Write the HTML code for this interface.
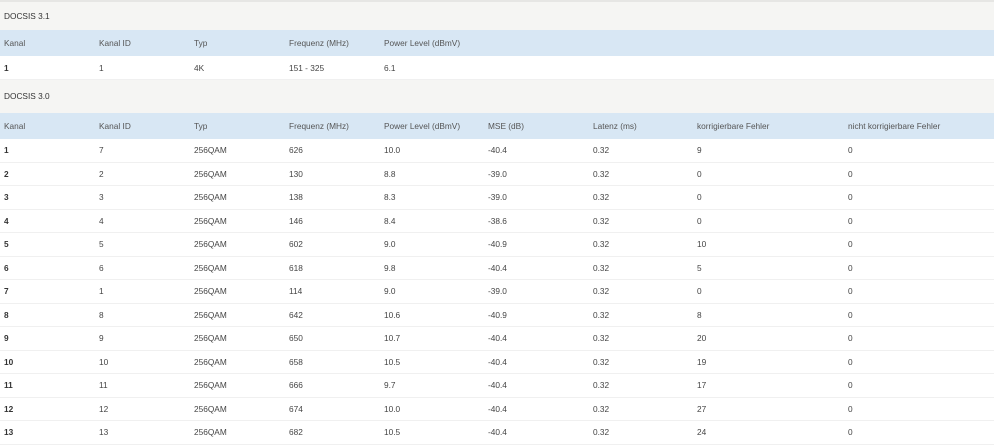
<!DOCTYPE html>
<html><head><style>
*{margin:0;padding:0;box-sizing:border-box}
body{width:999px;height:446px;background:#fff;font-family:"Liberation Sans",sans-serif;font-size:8.3px;color:#444;overflow:hidden;position:relative}
.wrap{position:absolute;left:0;top:0;width:994px}
.title{height:30px;background:#f5f5f3;padding:9px 0 0 4px;border-top:2px solid #e6e6e4;color:#333}
.hdr{height:26px;background:#d8e7f4;position:relative;color:#555}
.row{height:23.5px;position:relative;border-bottom:1px solid #f0f0f0}
.c{position:absolute;top:50%;transform:translateY(-50%);white-space:nowrap}
.row .c:first-child{font-weight:bold;color:#333}
</style></head><body><div class="wrap">
<div class="title">DOCSIS 3.1</div>
<div class="hdr"><span class="c" style="left:4px">Kanal</span><span class="c" style="left:99px">Kanal ID</span><span class="c" style="left:194px">Typ</span><span class="c" style="left:289px">Frequenz (MHz)</span><span class="c" style="left:384px">Power Level (dBmV)</span></div>
<div class="row" style="height:24px"><span class="c" style="left:4px">1</span><span class="c" style="left:99px">1</span><span class="c" style="left:194px">4K</span><span class="c" style="left:289px">151 - 325</span><span class="c" style="left:384px">6.1</span></div>
<div class="title" style="height:33px;border-top:none;padding-top:11px">DOCSIS 3.0</div>
<div class="hdr"><span class="c" style="left:4px">Kanal</span><span class="c" style="left:99px">Kanal ID</span><span class="c" style="left:194px">Typ</span><span class="c" style="left:289px">Frequenz (MHz)</span><span class="c" style="left:384px">Power Level (dBmV)</span><span class="c" style="left:488px">MSE (dB)</span><span class="c" style="left:593px">Latenz (ms)</span><span class="c" style="left:697px">korrigierbare Fehler</span><span class="c" style="left:848px">nicht korrigierbare Fehler</span></div>
<div id="rows"></div>
</div>
<script>
var d=[[1,7,626,"10.0","-40.4",9],[2,2,130,"8.8","-39.0",0],[3,3,138,"8.3","-39.0",0],[4,4,146,"8.4","-38.6",0],[5,5,602,"9.0","-40.9",10],[6,6,618,"9.8","-40.4",5],[7,1,114,"9.0","-39.0",0],[8,8,642,"10.6","-40.9",8],[9,9,650,"10.7","-40.4",20],[10,10,658,"10.5","-40.4",19],[11,11,666,"9.7","-40.4",17],[12,12,674,"10.0","-40.4",27],[13,13,682,"10.5","-40.4",24]];
var h="";d.forEach(function(r){h+='<div class="row"><span class="c" style="left:4px">'+r[0]+'</span><span class="c" style="left:99px">'+r[1]+'</span><span class="c" style="left:194px">256QAM</span><span class="c" style="left:289px">'+r[2]+'</span><span class="c" style="left:384px">'+r[3]+'</span><span class="c" style="left:488px">'+r[4]+'</span><span class="c" style="left:593px">0.32</span><span class="c" style="left:697px">'+r[5]+'</span><span class="c" style="left:848px">0</span></div>'});
document.getElementById("rows").innerHTML=h;
</script>
</body></html>
